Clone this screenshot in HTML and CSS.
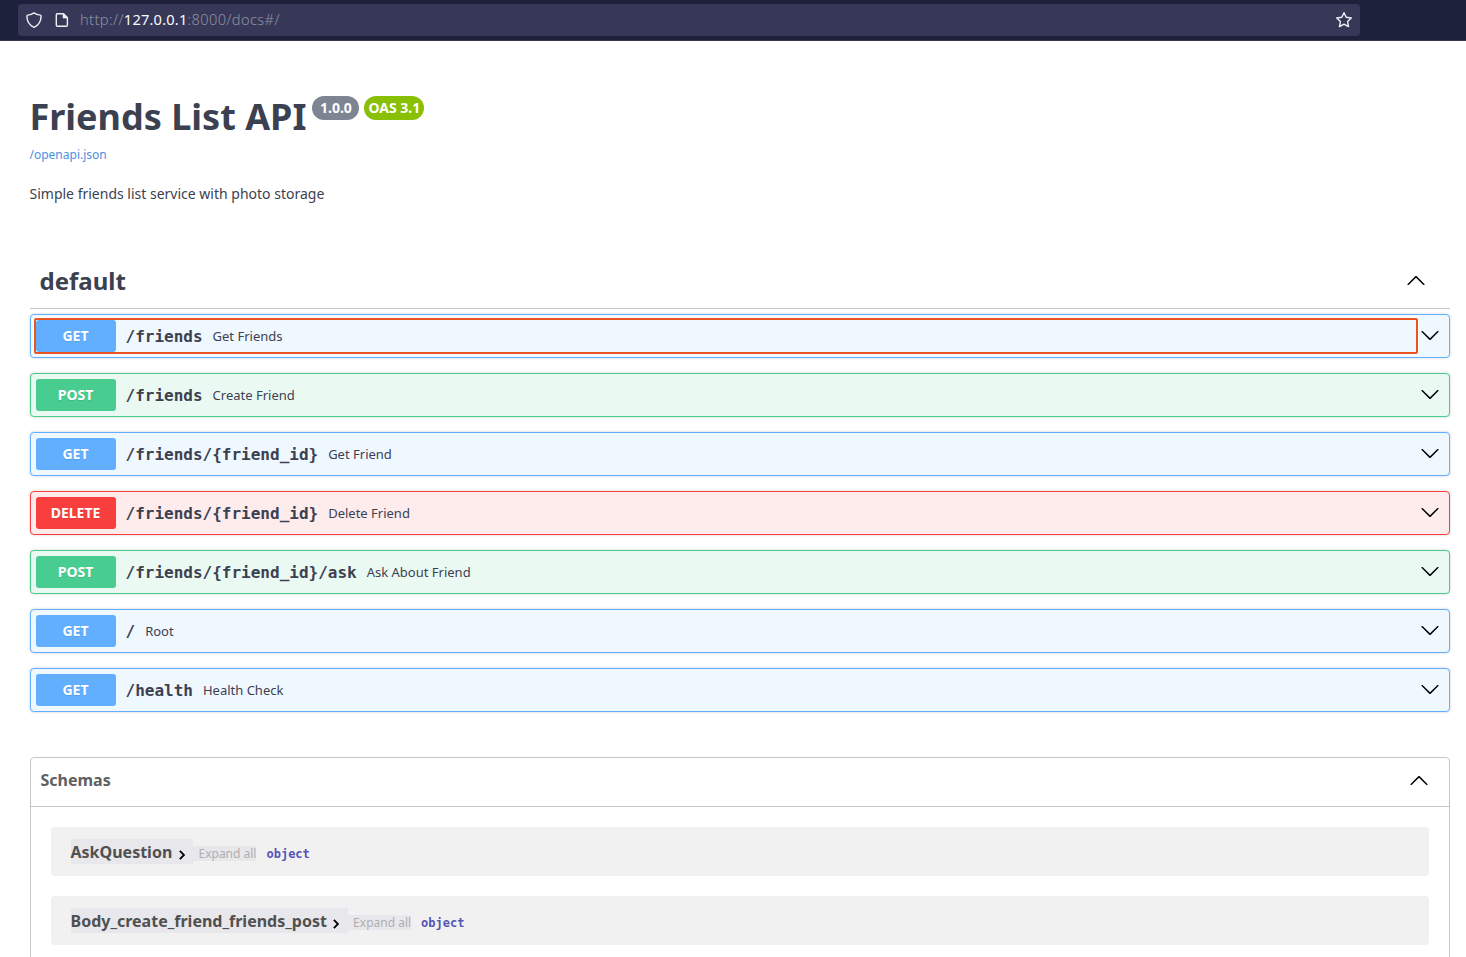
FILE: index.html
```html
<!DOCTYPE html>
<html lang="en">
<head>
<meta charset="utf-8">
<title>Friends List API</title>
<link rel="stylesheet" href="styles.css">
</head>
<body>
<svg class="defs" width="0" height="0">
  <symbol id="down" viewBox="0 0 20 20"><path d="M17.418 6.109c.272-.268.709-.268.979 0s.271.701 0 .969l-7.908 7.83c-.27.268-.707.268-.979 0l-7.908-7.83c-.27-.268-.27-.701 0-.969.271-.268.709-.268.979 0L10 13.25l7.418-7.141z"/></symbol>
  <symbol id="up" viewBox="0 0 20 20"><path d="M17.418 14.908c.272.268.709.268.979 0s.271-.701 0-.969l-7.908-7.83c-.27-.268-.707-.268-.979 0l-7.908 7.83c-.27.268-.27.701 0 .969.271.268.709.268.979 0L10 7.767l7.418 7.141z"/></symbol>
  <symbol id="right" viewBox="0 0 24 24"><path d="M10 6L8.59 7.41 13.17 12l-4.58 4.59L10 18l6-6z"/></symbol>
</svg>
<header class="browser">
  <div class="address">
    <svg class="shield" width="16" height="16" viewBox="0 0 16 16"><path d="M8 .9c1.7 1.3 3.900 2 6.400 2.200.400 0 .700.300.700.800-.100 5.600-2.300 9.200-7.100 11.400C3.200 13.100 1 9.500.900 3.900c0-.500.300-.800.700-.800C4.100 2.900 6.300 2.200 8 .9z"/></svg>
    <svg class="page" width="16" height="16" viewBox="0 0 16 16"><path d="M3.500 1.700h6l3.900 3.900v7.400c0 .700-.500 1.200-1.200 1.200H3.500c-.700 0-1.200-.500-1.200-1.200V2.900c0-.700.500-1.200 1.200-1.200z"/><path class="fold" d="M9 1.700v4.400h4.400z"/></svg>
    <span class="url">http://<b>127.0.0.1</b>:8000/docs#/</span>
    <svg class="star" width="18" height="18" viewBox="0 0 18 18"><path d="M9 1.700l2.200 4.600 5.100.7-3.700 3.500.9 5.100L9 13.100l-4.500 2.500.9-5.100L1.700 7l5.100-.7z"/></svg>
  </div>
</header>
<main class="docs">
  <section class="info">
    <h1 class="title"><span class="name">Friends List API</span><span class="badge version">1.0.0</span><span class="badge oas">OAS 3.1</span></h1>
    <a class="spec">/openapi.json</a>
    <p class="description">Simple friends list service with photo storage</p>
  </section>
  <section class="operations">
    <h2 class="tag"><span>default</span><svg width="20" height="20"><use href="#up"/></svg></h2>
    <div class="op get"><div class="summary focused"><span class="method">GET</span><span class="path">/friends</span><span class="text">Get Friends</span></div><svg class="arrow" width="20" height="20"><use href="#down"/></svg></div>
    <div class="op post"><div class="summary"><span class="method">POST</span><span class="path">/friends</span><span class="text">Create Friend</span></div><svg class="arrow" width="20" height="20"><use href="#down"/></svg></div>
    <div class="op get"><div class="summary"><span class="method">GET</span><span class="path">/friends/{friend_id}</span><span class="text">Get Friend</span></div><svg class="arrow" width="20" height="20"><use href="#down"/></svg></div>
    <div class="op delete"><div class="summary"><span class="method">DELETE</span><span class="path">/friends/{friend_id}</span><span class="text">Delete Friend</span></div><svg class="arrow" width="20" height="20"><use href="#down"/></svg></div>
    <div class="op post"><div class="summary"><span class="method">POST</span><span class="path">/friends/{friend_id}/ask</span><span class="text">Ask About Friend</span></div><svg class="arrow" width="20" height="20"><use href="#down"/></svg></div>
    <div class="op get"><div class="summary"><span class="method">GET</span><span class="path">/</span><span class="text">Root</span></div><svg class="arrow" width="20" height="20"><use href="#down"/></svg></div>
    <div class="op get"><div class="summary"><span class="method">GET</span><span class="path">/health</span><span class="text">Health Check</span></div><svg class="arrow" width="20" height="20"><use href="#down"/></svg></div>
  </section>
  <section class="schemas">
    <h3 class="schemas-head"><span>Schemas</span><svg width="20" height="20"><use href="#up"/></svg></h3>
    <div class="schema-list">
      <div class="schema"><span class="schema-name">AskQuestion<svg width="18" height="18"><use href="#right"/></svg></span><span class="expand">Expand all</span><span class="type">object</span></div>
      <div class="schema"><span class="schema-name">Body_create_friend_friends_post<svg width="18" height="18"><use href="#right"/></svg></span><span class="expand">Expand all</span><span class="type">object</span></div>
    </div>
  </section>
</main>
</body>
</html>
```
FILE: styles.css
```css
* { box-sizing: border-box; }
body { margin: 0; height: 957px; overflow: hidden; background: #fff; color: #3b4151; font-family: "Noto Sans", sans-serif; }
h1, h2, h3, p { margin: 0; }
.defs { position: absolute; }

.browser { height: 41px; padding: 4px 106px 0 18px; background: #1e213c; border-bottom: 1px solid #38384f; }
.address { display: flex; align-items: center; height: 32px; padding: 0 7px 0 8px; border-radius: 4px; background: #373857; }
.address svg { fill: none; stroke: #f0f0f4; stroke-width: 1.4; stroke-linejoin: round; }
.address .page { margin-left: 12px; }
.address .fold { fill: #f0f0f4; stroke-width: .6; }
.url { flex: 1; margin: 0 0 2px 10px; color: #9091a3; font-size: 14.6px; font-weight: 300; letter-spacing: .4px; line-height: 20px; }
.url b { color: #fbfbfe; font-weight: 400; letter-spacing: .2px; }

.docs { padding: 0 16px 0 30px; }
.info { height: 217px; margin-left: -.5px; padding-top: 51px; }
.title { display: flex; align-items: flex-start; height: 53px; font-size: 36px; line-height: 49px; }
.name { margin-right: .5px; }
.badge { height: 24px; margin: 4px 0 0 5px; border-radius: 12px; color: #fff; font-size: 14px; line-height: 24px; text-align: center; }
.version { width: 47px; padding-left: 1px; background: #7d8492; }
.oas { width: 60px; padding-left: 1px; background: #89bf04; }
.spec { display: block; height: 20px; color: #4990e2; font-size: 12px; line-height: 20px; }
.description { margin-top: 18px; font-size: 14px; line-height: 22px; }

.tag { display: flex; align-items: center; justify-content: space-between; height: 51px; margin-bottom: 5px; padding: 0 24px 4px 9.5px; border-bottom: 1px solid #c4c6cb; font-size: 24px; line-height: 32px; }
.tag svg, .arrow, .schemas-head svg { margin-bottom: 2px; }
.op { display: flex; align-items: center; height: 44px; margin-bottom: 15px; padding: 0 9px 0 3px; border: 1px solid; border-radius: 4px; box-shadow: 0 0 3px rgba(0,0,0,.19); }
.get { border-color: #61affe; background: #eff7ff; }
.post { border-color: #49cc90; background: #ebf9f3; }
.delete { border-color: #f93e3e; background: #feebeb; }
.summary { display: flex; align-items: center; flex: 1; height: 36px; margin-right: 2px; border: 2px solid transparent; border-radius: 2px; }
.focused { border-color: #e95420; box-shadow: 0 0 0 1px #fff; }
.method { width: 80px; height: 32px; padding-right: 1px; border-radius: 3px; color: #fff; font-size: 14px; font-weight: 700; line-height: 32px; text-align: center; text-shadow: 0 1px 0 rgba(0,0,0,.1); }
.get .method { background: #61affe; }
.post .method { background: #49cc90; }
.delete .method { background: #f93e3e; }
.path { margin: 2px 10px 0 9.5px; font: 700 16px/20px "DejaVu Sans Mono", monospace; }
.text { font-size: 13px; line-height: 18px; }

.schemas { height: 240px; margin-top: 45px; border: 1px solid #c4c6cb; border-radius: 4px; }
.schemas-head { display: flex; align-items: center; justify-content: space-between; height: 49px; padding: 0 20px 3px 9.5px; border-bottom: 1px solid #c4c6cb; color: #606060; font-size: 16px; line-height: 22px; }
.schemas-head span { margin-bottom: 2px; }
.schema-list { padding: 20px; }
.schema { display: flex; align-items: center; height: 49px; margin-bottom: 20px; padding: 0 19.5px; border-radius: 4px; background: #f1f1f1; }
.schema-name { display: flex; align-items: center; height: 25px; color: #505050; background: #e8e8ec; font-size: 16px; font-weight: 700; }
.schema-name svg { margin: 6px 2.7px 0 .5px; stroke: #000; stroke-width: .6; }
.expand { height: 15px; margin-top: 4px; padding-left: 5px; background: #e8e8ec; color: #afaeae; font-size: 12px; line-height: 15px; }
.type { margin: 4px 0 0 10px; color: #5555b5; font: 700 12px/16px "DejaVu Sans Mono", monospace; }
```
